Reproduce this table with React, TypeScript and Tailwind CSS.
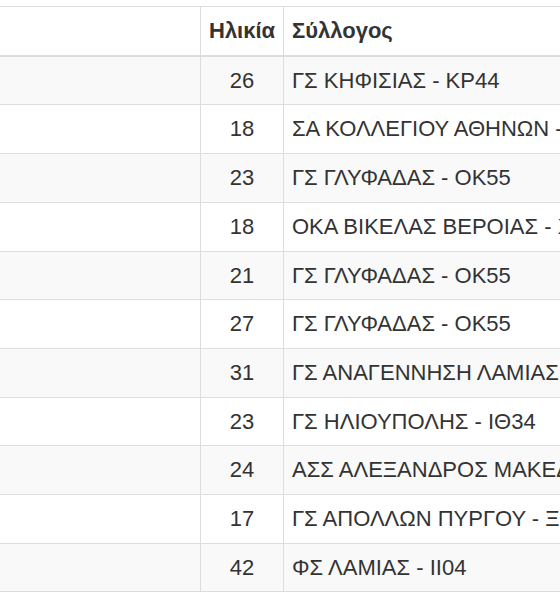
const rows: [number, string][] = [
  [26, 'ΓΣ ΚΗΦΙΣΙΑΣ - ΚΡ44'],
  [18, 'ΣΑ ΚΟΛΛΕΓΙΟΥ ΑΘΗΝΩΝ - ΑΘ21'],
  [23, 'ΓΣ ΓΛΥΦΑΔΑΣ - ΟΚ55'],
  [18, 'ΟΚΑ ΒΙΚΕΛΑΣ ΒΕΡΟΙΑΣ - ΧΑ12'],
  [21, 'ΓΣ ΓΛΥΦΑΔΑΣ - ΟΚ55'],
  [27, 'ΓΣ ΓΛΥΦΑΔΑΣ - ΟΚ55'],
  [31, 'ΓΣ ΑΝΑΓΕΝΝΗΣΗ ΛΑΜΙΑΣ - ΙΙ09'],
  [23, 'ΓΣ ΗΛΙΟΥΠΟΛΗΣ - ΙΘ34'],
  [24, 'ΑΣΣ ΑΛΕΞΑΝΔΡΟΣ ΜΑΚΕΔΟΝΑΣ - ΘΕ17'],
  [17, 'ΓΣ ΑΠΟΛΛΩΝ ΠΥΡΓΟΥ - ΞΘ05'],
  [42, 'ΦΣ ΛΑΜΙΑΣ - ΙΙ04'],
];

export default function App() {
  return (
    <div className="w-[560px] h-[600px] overflow-hidden bg-white pt-[6px] font-['Liberation_Sans',Arial,sans-serif] text-[22px] leading-[31.7px] text-[#333]">
      <table className="-ml-px table-fixed w-[800px] border-collapse border border-[#ddd]">
        <colgroup>
          <col className="w-[201px]" />
          <col className="w-[83px]" />
          <col />
        </colgroup>
        <thead>
          <tr>
            <th className="border border-b-2 border-[#ddd] p-2" />
            <th className="border border-b-2 border-[#ddd] p-2 text-left font-bold whitespace-nowrap">Ηλικία</th>
            <th className="border border-b-2 border-[#ddd] p-2 text-left font-bold whitespace-nowrap">Σύλλογος</th>
          </tr>
        </thead>
        <tbody>
          {rows.map(([age, club], i) => (
            <tr key={i} className={i % 2 === 0 ? 'bg-[#f9f9f9]' : 'bg-white'}>
              <td className="border border-[#ddd] p-2" />
              <td className="border border-[#ddd] p-2 text-center">{age}</td>
              <td className="border border-[#ddd] p-2 whitespace-nowrap">{club}</td>
            </tr>
          ))}
        </tbody>
      </table>
    </div>
  );
}
